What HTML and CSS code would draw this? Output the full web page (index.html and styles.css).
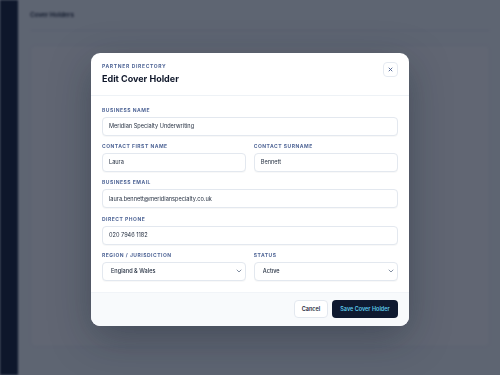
FILE: index.html
```html
<!DOCTYPE html>
<html lang="en">
<head>
    <meta charset="UTF-8">
    <meta name="viewport" content="width=device-width, initial-scale=1.0">
    <title>Edit Cover Holder</title>
    <link rel="stylesheet" href="styles.css">
</head>
<body>
    <div class="app">
        <aside class="sidebar"></aside>
        <main class="main">
            <div class="page-header">
                <h1>Cover Holders</h1>
            </div>
            <div class="page-card"></div>
        </main>
    </div>

    <div class="overlay">
        <div class="modal">
            <div class="modal-header">
                <div>
                    <div class="eyebrow">Partner Directory</div>
                    <h2>Edit Cover Holder</h2>
                </div>
                <button class="close-btn" type="button" aria-label="Close">
                    <svg width="5" height="5" viewBox="0 0 10 10">
                        <path d="M2 2 L8 8 M8 2 L2 8" stroke="#4a5f8f" stroke-width="1.8" stroke-linecap="round"/>
                    </svg>
                </button>
            </div>

            <div class="modal-body">
                <div class="field">
                    <label for="bizName">Business Name</label>
                    <input id="bizName" type="text" value="Meridian Specialty Underwriting">
                </div>
                <div class="row">
                    <div class="field">
                        <label for="firstName">Contact First Name</label>
                        <input id="firstName" type="text" value="Laura">
                    </div>
                    <div class="field">
                        <label for="surname">Contact Surname</label>
                        <input id="surname" type="text" value="Bennett">
                    </div>
                </div>
                <div class="field">
                    <label for="email">Business Email</label>
                    <input id="email" type="email" value="laura.bennett@meridianspecialty.co.uk">
                </div>
                <div class="field">
                    <label for="phone">Direct Phone</label>
                    <input id="phone" type="text" value="020 7946 1182">
                </div>
                <div class="row">
                    <div class="field">
                        <label for="region">Region / Jurisdiction</label>
                        <select id="region">
                            <option>England &amp; Wales</option>
                            <option>Scotland</option>
                            <option>Northern Ireland</option>
                        </select>
                    </div>
                    <div class="field">
                        <label for="status">Status</label>
                        <select id="status">
                            <option>Active</option>
                            <option>Inactive</option>
                        </select>
                    </div>
                </div>
            </div>

            <div class="modal-footer">
                <button class="btn btn-secondary" type="button">Cancel</button>
                <button class="btn btn-primary" type="submit">Save Cover Holder</button>
            </div>
        </div>
    </div>
</body>
</html>
```

FILE: styles.css
```css
* {
    box-sizing: border-box;
}

body {
    margin: 0;
    font-family: Inter, "Noto Sans", sans-serif;
    background-color: #f1f5f9;
    color: #0f172a;
    overflow: hidden;
}

/* page behind the dialog */
.app {
    display: flex;
    height: 375px;
    filter: blur(1.2px);
}
.sidebar {
    width: 18px;
    background-color: #0c1730;
}
.main {
    flex: 1;
    padding: 0 10px 0 12px;
    display: flex;
    flex-direction: column;
}
.page-header {
    height: 31px;
    display: flex;
    align-items: center;
    border-bottom: 1px solid #e2e8f0;
}
.page-header h1 {
    margin: 0;
    font-size: 6.3px;
    font-weight: 700;
    color: #1e293b;
}
.page-card {
    margin: 14px 0 28px;
    flex: 1;
    background: #f8fafc;
    border: 1px solid #e8edf3;
    border-radius: 6px;
}

.overlay {
    position: fixed;
    inset: 0;
    background: rgba(15, 23, 42, 0.65);
    display: flex;
    align-items: center;
    justify-content: center;
}

.modal {
    width: 318px;
    margin-top: 4px;
    background: #ffffff;
    border-radius: 9px;
    overflow: hidden;
    box-shadow: 0 12px 40px rgba(15, 23, 42, 0.35);
}

.modal-header {
    display: flex;
    justify-content: space-between;
    align-items: flex-start;
    padding: 9px 11px 10px;
    border-bottom: 1px solid #eef2f6;
}
.eyebrow {
    font-size: 5px;
    line-height: 8px;
    font-weight: 700;
    letter-spacing: 0.13em;
    text-transform: uppercase;
    color: #4f6596;
}
.modal-header h2 {
    margin: 3px 0 0;
    font-size: 9px;
    line-height: 12px;
    font-weight: 700;
    color: #0f172a;
}
.close-btn {
    width: 15px;
    height: 15px;
    padding: 0;
    display: flex;
    align-items: center;
    justify-content: center;
    background: #ffffff;
    border: 1px solid #e5eaf1;
    border-radius: 4px;
    cursor: pointer;
}

.modal-body {
    display: flex;
    flex-direction: column;
    gap: 7.3px;
    padding: 10.5px 11px 11px;
}
.row {
    display: grid;
    grid-template-columns: 1fr 1fr;
    gap: 7.5px;
}
.field {
    display: flex;
    flex-direction: column;
}
.field label {
    font-size: 5px;
    line-height: 7px;
    font-weight: 700;
    letter-spacing: 0.1em;
    text-transform: uppercase;
    color: #4f6596;
    margin-bottom: 3px;
}
.field input,
.field select {
    height: 19px;
    width: 100%;
    padding: 0 6px;
    font-family: inherit;
    font-size: 5.6px;
    color: #1e293b;
    background: #ffffff;
    border: 1px solid #e3e8ef;
    border-radius: 4px;
    box-shadow: 0 1px 1px rgba(15, 23, 42, 0.03);
    outline: none;
}
.field select {
    appearance: none;
    -webkit-appearance: none;
    padding-left: 8px;
    font-weight: 500;
    background-image: url("data:image/svg+xml;utf8,<svg xmlns='http://www.w3.org/2000/svg' width='8' height='8' viewBox='0 0 8 8'><path d='M2 3 L4 5 L6 3' fill='none' stroke='%2364748b' stroke-width='0.8' stroke-linecap='round'/></svg>");
    background-repeat: no-repeat;
    background-position: right 2px center;
    background-size: 8px 8px;
}

.modal-footer {
    display: flex;
    justify-content: flex-end;
    gap: 4px;
    padding: 7px 11px 8px;
    background: #f8fafc;
    border-top: 1px solid #f1f4f8;
}
.btn {
    height: 18px;
    font-family: inherit;
    font-size: 5.5px;
    font-weight: 600;
    border-radius: 4px;
    cursor: pointer;
}
.btn-secondary {
    width: 34px;
    padding: 0;
    background: #ffffff;
    color: #1e293b;
    border: 1px solid #e3e8ef;
}
.btn-primary {
    width: 66px;
    padding: 0;
    background: #0f1a30;
    color: #5cc8ea;
    border: none;
}
.btn-primary:hover {
    background: #18264a;
}
```
